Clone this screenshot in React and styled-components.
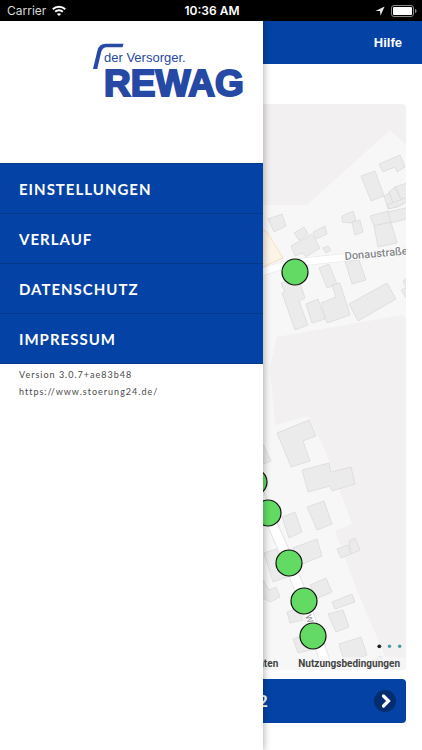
import styled, { createGlobalStyle } from "styled-components";

const BLUE = "#0443a5";

const GlobalStyle = createGlobalStyle`
    * {
        box-sizing: border-box;
    }
    body {
        margin: 0;
        background-color: white;
        font-family: Roboto, "Liberation Sans", sans-serif;
    }
`

const Page = styled.div`
    min-height: 100vh;
    display: flex;
    flex-direction: column;
`

const StatusBar = styled.div`
    height: 21px;
    padding: 0 5px 0 7px;
    display: grid;
    grid-template-columns: 1fr auto 1fr;
    align-items: center;
    background-color: black;
    color: white;
    font-family: Inter, sans-serif;
    font-size: 12px;
    line-height: 20px;
`

const StatusGroup = styled.div`
    display: flex;
    align-items: center;
    gap: 6px;
    color: #d8d8d8;
    justify-content: ${(props) => (props.$end ? "flex-end" : "flex-start")};
`

const Clock = styled.span`
    font-weight: 600;
`

const Screen = styled.div`
    position: relative;
    flex: 1;
    display: flex;
    flex-direction: column;
`

const Header = styled.header`
    height: 43px;
    padding: 0 20px;
    display: flex;
    align-items: center;
    justify-content: flex-end;
    background-color: ${BLUE};
`

const HelpLink = styled.a`
    color: white;
    font-family: "Liberation Sans", sans-serif;
    font-size: 13px;
    font-weight: 700;
    text-decoration: none;
`

const Main = styled.main`
    flex: 1;
    display: flex;
    flex-direction: column;
    gap: 9px;
    padding: 40px 16px 27px;
`

const MapCard = styled.div`
    position: relative;
    flex: 1;
    min-height: 300px;
    border-radius: 4px;
    overflow: hidden;
    background-color: #f7f7f7;
`

const MapDrawing = styled.svg`
    position: absolute;
    inset: 0;
    width: 100%;
    height: 100%;
`

const Attribution = styled.div`
    position: absolute;
    left: 0;
    right: 0;
    bottom: 0;
    display: flex;
    justify-content: flex-end;
    gap: 20px;
    padding: 0 6px;
    background-color: rgba(247, 247, 247, 0.7);
    color: #444;
    font-size: 10px;
    font-weight: 700;
    line-height: 13px;
    a {
        color: inherit;
        text-decoration: none;
    }
`

const NextButton = styled.button`
    height: 44px;
    padding: 0 10px;
    border: 0;
    border-radius: 4px;
    display: grid;
    grid-template-columns: 22px 1fr 22px;
    align-items: center;
    background-color: ${BLUE};
    color: white;
    font-family: inherit;
    font-size: 16px;
    font-weight: 700;
    cursor: pointer;
`

const Drawer = styled.aside`
    position: absolute;
    top: 0;
    bottom: 0;
    left: 0;
    width: 263px;
    background-color: white;
    box-shadow: 1px 0 7px rgba(0, 0, 0, 0.3);
    clip-path: inset(0 -12px 0 0);
`

const DrawerHeader = styled.div`
    height: 142px;
    padding: 20px 18px;
    display: flex;
    justify-content: flex-end;
`

const Menu = styled.nav`
    display: flex;
    flex-direction: column;
    border-top: 1px solid #03388a;
`

const MenuLink = styled.a`
    height: 50px;
    padding: 0 19px;
    display: flex;
    align-items: center;
    border-bottom: 1px solid #03388a;
    background-color: ${BLUE};
    color: white;
    font-family: Lato, sans-serif;
    font-size: 15px;
    font-weight: 700;
    letter-spacing: 1px;
    text-decoration: none;
`

const AppInfo = styled.div`
    display: flex;
    flex-direction: column;
    padding: 2px 19px;
    color: #4a4a4a;
    font-family: Lato, sans-serif;
    font-size: 9px;
    line-height: 17px;
    letter-spacing: 1px;
    a {
        color: inherit;
        text-decoration: none;
    }
`

const menuItems = [
    { label: "EINSTELLUNGEN", href: "#einstellungen" },
    { label: "VERLAUF", href: "#verlauf" },
    { label: "DATENSCHUTZ", href: "#datenschutz" },
    { label: "IMPRESSUM", href: "#impressum" },
]

const buildings = [
    "379,164 400,155 405,167 397,172 395,167 383,172",
    "361,176 375,171 384,196 371,201",
    "384,196 389,193 395,207 388,209",
    "395,187 410,182 410,197 402,199",
    "389,192 395,187 403,204 395,208",
    "387,205 390,209 408,202 408,197",
    "370,216 388,211 391,222 374,226",
    "374,226 391,222 397,243 378,247",
    "388,212 410,207 410,218 391,223",
    "342,216 353,211 356,220 351,223 342,222",
    "352,222 360,220 363,232 355,235",
    "268,219 282,214 286,226 274,232",
    "294,233 304,227 308,234 299,240",
    "313,232 325,226 327,234 316,239",
    "291,246 312,234 320,248 306,257 303,253 295,256",
    "323,248 328,246 331,250 326,253",
    "319,268 329,264 337,284 327,288",
    "345,261 359,260 366,280 352,284",
    "281,283 298,277 305,298 299,301 308,325 295,330 282,293 285,292",
    "306,304 318,299 325,319 312,323",
    "321,303 336,297 332,285 340,283 350,315 327,323",
    "349,304 387,283 396,299 358,321",
    "403,281 410,275 410,290 406,288",
    "401,290 410,286 410,304",
    "277,433 309,420 316,436 303,441 310,461 291,467 287,457",
    "258,436 264,446 271,461 258,466",
    "302,470 329,463 331,472 351,467 355,484 332,491 330,486 308,492",
    "307,507 324,501 332,524 317,530",
    "282,517 295,512 302,532 289,538",
    "293,548 317,539 322,556 300,565",
    "337,549 348,545 351,554 341,558",
    "349,541 355,538 360,550 351,554",
    "264,553 276,549 290,576 273,582",
    "258,577 263,580 269,590 276,587 280,597 270,602 258,595",
    "310,585 326,578 332,592 316,599",
    "332,602 352,594 355,602 335,609",
    "328,614 343,610 349,627 336,632",
    "287,612 298,608 303,620 290,623",
    "293,639 305,635 311,650 298,653",
    "339,644 361,637 367,655 345,664",
    "372,660 381,656 384,664 375,668",
]

const markers = [
    [295, 272],
    [254, 482],
    [268, 513],
    [289, 563],
    [304, 601],
    [313, 636],
]

function Wifi() {
    return (
        <svg width="14" height="12" viewBox="0 0 14 12" fill="none" stroke="white" strokeWidth="2" aria-hidden="true">
            <path d="M0.8 4.2C4.2 0.8 9.8 0.8 13.2 4.2" />
            <path d="M3.2 6.8C5.3 4.8 8.7 4.8 10.8 6.8" />
            <path d="M7 11L4.9 8.9C6 7.9 8 7.9 9.1 8.9Z" fill="white" stroke="none" />
        </svg>
    )
}

function Location() {
    return (
        <svg width="10" height="10" viewBox="0 0 10 10" aria-hidden="true">
            <path d="M9.6 0.4L5.5 9.7L5 5H0.4Z" fill="#e6e6e6" />
        </svg>
    )
}

function Battery() {
    return (
        <svg width="26" height="12" viewBox="0 0 26 12" aria-hidden="true">
            <rect x="0.5" y="0.5" width="22" height="11" rx="2.5" fill="none" stroke="#8a8a8a" />
            <rect x="2" y="2" width="19" height="8" rx="1" fill="white" />
            <path d="M24 4C26 4.6 26 7.4 24 8Z" fill="#8a8a8a" />
        </svg>
    )
}

function Logo() {
    return (
        <svg width="152" height="70" viewBox="93 40 152 70" fill="#2549a5" fontFamily="Liberation Sans, Arial, sans-serif" role="img" aria-label="REWAG">
            <path d="M93 68L97.300 50Q98.800 42.800 106 42.800H123.500L122.500 46.200H107Q102.300 46.200 101.200 51L97.200 68Z" />
            <text x="104" y="61" fontSize="13">der Versorger.</text>
            <text x="104" y="95" fontSize="37" fontWeight="700" stroke="#2549a5" strokeWidth="2">REWAG</text>
        </svg>
    )
}

function StreetMap() {
    return (
        <MapDrawing viewBox="16 104 390 566" preserveAspectRatio="xMaxYMid slice" aria-hidden="true">
            <g fill="#f2f0f1">
                <path d="M16 104H406V145L390 130L307 205H16Z" />
                <path d="M277 337L402 315L406 318V670H391L356 588L335 531L352 524L325 450L308 416L275 425L270 367Z" />
            </g>
            <path d="M258 228L267 232L283 258L258 269Z" fill="#fdf4e8" stroke="#f8dfc0" />
            <g fill="none" strokeLinejoin="round">
                <path d="M250 277C275 266 295 262 320 260L410 251" stroke="#e4e4e4" strokeWidth="8" />
                <path d="M250 277C275 266 295 262 320 260L410 251" stroke="white" strokeWidth="7" />
                <path d="M254 482L285 553L300 590L330 675" stroke="#e4e4e4" strokeWidth="11" />
                <path d="M254 482L285 553L300 590L330 675" stroke="white" strokeWidth="9" />
            </g>
            <g fill="#ebebeb" stroke="#dadada" strokeWidth="0.800">
                {buildings.map((points) => (
                    <polygon key={points} points={points} />
                ))}
            </g>
            <g fill="#84878a" fontFamily="Roboto, sans-serif" stroke="white" strokeWidth="2" paintOrder="stroke">
                <text fontSize="11" fontWeight="500" transform="translate(345 260) rotate(-5)">Donaustraße</text>
                <text fontSize="9" transform="translate(305 616) rotate(70)">W</text>
            </g>
            <g fill="#63da63" stroke="#111" strokeWidth="1.200">
                {markers.map(([x, y]) => (
                    <circle key={y} cx={x} cy={y} r="13" />
                ))}
            </g>
            <circle cx="379.300" cy="646.300" r="1.900" fill="#222" />
            <circle cx="389.500" cy="646.300" r="1.700" fill="#459c9d" />
            <circle cx="399.700" cy="646.300" r="1.700" fill="#459c9d" />
        </MapDrawing>
    )
}

function NextIcon() {
    return (
        <svg width="22" height="22" viewBox="0 0 22 22" fill="none" aria-hidden="true">
            <circle cx="11" cy="11" r="11" fill="#042d70" />
            <path d="M9.500 6L14.500 11L9.500 16" stroke="white" strokeWidth="3.200" strokeLinecap="round" />
        </svg>
    )
}

function App() {
    return (
        <Page>
            <GlobalStyle />
            <StatusBar>
                <StatusGroup>
                    <span>Carrier</span>
                    <Wifi />
                </StatusGroup>
                <Clock>10:36 AM</Clock>
                <StatusGroup $end>
                    <Location />
                    <Battery />
                </StatusGroup>
            </StatusBar>
            <Screen>
                <Header>
                    <HelpLink href="#hilfe">Hilfe</HelpLink>
                </Header>
                <Main>
                    <MapCard>
                        <StreetMap />
                        <Attribution>
                            <span>Kartendaten</span>
                            <a href="#nutzungsbedingungen">Nutzungsbedingungen</a>
                        </Attribution>
                    </MapCard>
                    <NextButton type="button">
                        <span />
                        <span>Störung 1 von 2</span>
                        <NextIcon />
                    </NextButton>
                </Main>
                <Drawer>
                    <DrawerHeader>
                        <Logo />
                    </DrawerHeader>
                    <Menu>
                        {menuItems.map((item) => (
                            <MenuLink key={item.label} href={item.href}>{item.label}</MenuLink>
                        ))}
                    </Menu>
                    <AppInfo>
                        <span>Version 3.0.7+ae83b48</span>
                        <a href="https://www.stoerung24.de/">https://www.stoerung24.de/</a>
                    </AppInfo>
                </Drawer>
            </Screen>
        </Page>
    )
}

export default App;
